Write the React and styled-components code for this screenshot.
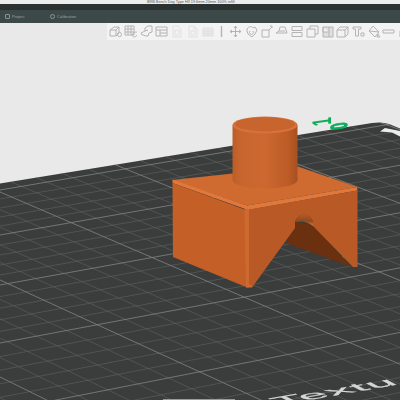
import React from "react";
import styled, { createGlobalStyle } from "styled-components";

const Global = createGlobalStyle`
  html, body { margin: 0; padding: 0; background: #e9e9e9; }
  #root { width: 400px; height: 400px; overflow: hidden; }
`;

const Page = styled.div`
  width: 400px; height: 400px; display: flex; flex-direction: column;
  font-family: "Liberation Sans", Arial, sans-serif; overflow: hidden;
`;
const TitleBar = styled.div`
  height: 4px; flex: none; background: #ececec; display: flex; padding-left: 147px;
  font-size: 3.8px; line-height: 5px; color: #555; white-space: nowrap;
`;
const DarkBar = styled.div`height: 6px; flex: none; background: #2a3130;`;
const TabBar = styled.div`
  height: 13px; flex: none; background: #3d4948; display: flex; align-items: center;
  padding-left: 5px; font-size: 4px; color: #9aa3a1;
`;
const Tab = styled.div`
  display: flex; align-items: center; gap: 2px; width: ${p => p.$w}px;
`;
const TabMark = styled.span`
  width: 3px; height: 3px; border: 0.7px solid #8c9492; border-radius: ${p => p.$round ? "50%" : "1px"};
`;
const Viewport = styled.div`
  position: relative; flex: 1; background: #e9e9e9; display: flex; flex-direction: column; align-items: flex-end;
`;
const Scene = styled.svg`
  position: absolute; left: 0; top: -23px; width: 400px; height: 400px; filter: blur(0.4px);
`;
const Toolbar = styled.div`
  position: relative; height: 17px; width: 293px; background: #f3f3f3; display: flex; align-items: center;
  padding-left: 1px; box-sizing: border-box;
`;
const Slot = styled.div`
  width: ${p => p.$w || 15.3}px; height: 13px; flex: none; display: flex; align-items: center; justify-content: center;
  color: ${p => p.$off ? "#e0e0e0" : "#b4b4b4"};
`;
const Glyph = styled.svg`
  width: 13px; height: 13px; fill: none; stroke: currentColor; stroke-width: 1; filter: blur(0.35px);
`;

const ICONS = [
  { d: "M1 5l4-3h5v6l-3 3H1zM1 5h6v6M7 5l3-3M9 8a2 2 0 1 0 3 3 2 2 0 1 0-3-3" },
  { d: "M1 1h9v9H1zM4 1v9M7 1v9M1 4h9M1 7h9M10 8a2 2 0 1 0 2 3 2 2 0 1 0-2-3" },
  { d: "M5 6V3l3-2h4v6l-3 1M5 6l-4 2 1 2h2l1 1h3l1-3M5 6l3-1" },
  { d: "M1 2h11v9H1zM1 5h11M5 5v6M5 8h7" },
  { d: "M3 1h5l3 3v8H3zM5 5h4v5H5z", off: true },
  { d: "M3 1h5l3 3v8H3zM8 1v3h3M5 6h4v4H5z", off: true },
  { d: "M2 3h10v8H2zM2 6h10M2 8.500h10", off: true, fill: true },
  { sep: true },
  { d: "M6.500 1v11M1 6.500h11M6.500 1L5 3M6.500 1L8 3M6.500 12L5 10M6.500 12L8 10M1 6.500L3 5M1 6.500L3 8M12 6.500L10 5M12 6.500L10 8" },
  { d: "M2 4c2-3 5-3 6-1l2-1 2 3-2 4-3 3-4-3-1-3zM5 6a2 2 0 1 0 3 0" },
  { d: "M2 5h7v7H2zM9 5l3-3M10 1h2v2" },
  { d: "M4 6l1-4h5l2 6H1l3-2zM4 6h6" },
  { d: "M2 1.500h10v4H2zM2 7.500h10v4H2z" },
  { d: "M1 4h8v8H1zM4 4V1h8v8H9" },
  { d: "M2 2h10v10H2zM8 2v10M2 2v5h6", shade: true },
  { d: "M1 5l3-3h8v7l-3 3H1zM1 5h8v7M9 5l3-3" },
  { d: "M1 2h8v2H6.500v7h-3V4H1zM9 8h3v3H9z" },
  { d: "M6 1l6 6-4 5-6-6zM2 6l10 1M11 9l2 3H10z" },
  { d: "M1 5h11v3H1z" },
  { d: "M3 12V6l4-4 5 0v10z" },
];

const VA = [8000, -1160];
const VB = [-3000, -1100];
const rayA = y0 => {
  const s = (y0 - VA[1]) / (0 - VA[0]);
  return `M0 ${y0}L420 ${y0 + s * 420}`;
};
const rayB = y0 => {
  const s = (y0 - VB[1]) / (0 - VB[0]);
  return `M-400 ${y0 - s * 400}L420 ${y0 + s * 420}`;
};
const subdivide = majors => {
  const minors = [];
  for (let i = 0; i < majors.length - 1; i++) {
    for (let k = 1; k < 5; k++) minors.push(majors[i] + ((majors[i + 1] - majors[i]) * k) / 5);
  }
  return minors;
};
const A_MAJOR = [190, 235, 285, 343, 411, 490, 580];
const B_MAJOR = [-300, -220, -145, -80, -15, 50, 118, 192, 280, 377, 480, 590];

const PLATE = "M0 183.500L372 123Q382 121.500 389 124L400 128.500V400H0Z";

function Plate() {
  return (
    <g>
      <clipPath id="plateClip"><path d={PLATE} /></clipPath>
      <path d={PLATE} fill="#3a3d3c" />
      <g clipPath="url(#plateClip)" fill="none">
        <path d={subdivide(A_MAJOR).map(rayA).join("")} stroke="#606362" strokeWidth="0.6" />
        <path d={subdivide(B_MAJOR).map(rayB).join("")} stroke="#606362" strokeWidth="0.6" />
        <path d={A_MAJOR.map(rayA).join("")} stroke="#828583" strokeWidth="0.8" />
        <path d={B_MAJOR.map(rayB).join("")} stroke="#828583" strokeWidth="0.8" />
        <path d="M380 131.500L385 128L400 131V136.500L392 132.500Z" fill="#ececec" />
        <rect x="163" y="399" width="72" height="1" fill="#9a9c9b" />
      </g>
      <text transform="matrix(0 -.45 .9 -.12 331 120.500)" fontSize="30" fontWeight="700" fontFamily="Liberation Sans" fill="#0cae5a" textAnchor="middle">1</text>
      <text transform="matrix(0 -.4 .78 -.12 346.500 125)" fontSize="30" fontWeight="700" fontFamily="Liberation Sans" fill="#0cae5a" stroke="#0cae5a" strokeWidth="1.500" textAnchor="middle">0</text>
      <text transform="matrix(1.44 -.25 .55 .28 280 405)" fontSize="33" fontWeight="400" fontFamily="Liberation Sans" fill="#d6d6d6" stroke="#d6d6d6" strokeWidth=".5" letterSpacing="1">Textu</text>
    </g>
  );
}

function Part() {
  return (
    <g>
      <defs>
        <linearGradient id="cyl" x1="0" x2="1" y1="0" y2="0">
          <stop offset="0" stopColor="#ba5d28" />
          <stop offset=".12" stopColor="#c8652e" />
          <stop offset=".5" stopColor="#cc6830" />
          <stop offset=".85" stopColor="#bd5c27" />
          <stop offset="1" stopColor="#a75021" />
        </linearGradient>
        <linearGradient id="hole" x1="0" x2="0" y1="0" y2="1">
          <stop offset="0" stopColor="#b25c28" />
          <stop offset=".55" stopColor="#934719" />
          <stop offset="1" stopColor="#d3804a" />
        </linearGradient>
      </defs>
      <path d="M172 180L298 166.500L357 187L247 205.500Z" fill="#cf6a30" />
      <path d="M172.500 179.500L247 205.500L357 187L357.500 190.500L248 210L172.500 183Z" fill="#e0783b" />
      <path d="M172.500 183L246 210V287L173 257Z" fill="#c55f28" />
      <path d="M286 243L295 222L313 225L352 267Z" fill="#6a300f" />
      <path d="M249 209.500L357.500 190.500V267L353 267L313 226A9 9 0 0 0 295 222L295 228L252 287.500H249Z" fill="#b95a26" />
      <path d="M244.500 209L249 209.500V287.500H246Z" fill="#cd6a31" />
      <path d="M246 287.500L253 287L249 284Z" fill="#cd6a31" />
      <path d="M295 222A9 9 0 0 1 313 226C308 222 300 220 295 222Z" fill="url(#hole)" />
      <path d="M232.500 125V180A32.500 8.500 0 0 0 297.500 180V125Z" fill="url(#cyl)" />
      <ellipse cx="265" cy="125" rx="32.500" ry="8.500" fill="#d8723a" />
      <ellipse cx="265" cy="124.300" rx="30" ry="7" fill="#c8652e" />
    </g>
  );
}

export default function App() {
  return (
    <Page>
      <Global />
      <TitleBar>BRB Bench Dog Type H3 19.6mm 20mm 100% infill</TitleBar>
      <DarkBar />
      <TabBar>
        <Tab $w={45}><TabMark />Project</Tab>
        <Tab $w={40}><TabMark $round />Calibration</Tab>
      </TabBar>
      <Viewport>
        <Scene viewBox="0 0 400 400">
          <Plate />
          <Part />
        </Scene>
        <Toolbar>
          {ICONS.map((ic, i) => ic.sep ? (
            <Slot key={i} $w={13}><Glyph viewBox="0 0 13 13"><path d="M6.500 1v11" strokeWidth="1.400" /></Glyph></Slot>
          ) : (
            <Slot key={i} $off={ic.off}>
              <Glyph viewBox="0 0 13 13"><path d={ic.d} fill={ic.fill || ic.shade ? "currentColor" : "none"} fillOpacity={ic.shade ? 0.3 : ic.fill ? 0.6 : 0} /></Glyph>
            </Slot>
          ))}
        </Toolbar>
      </Viewport>
    </Page>
  );
}
